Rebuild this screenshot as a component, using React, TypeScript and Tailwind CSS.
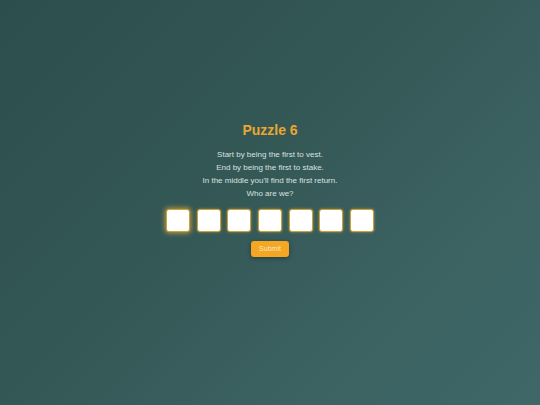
import React from "react";

export default function App() {
  const boxes = [0, 1, 2, 3, 4, 5, 6];
  return (
    <div
      className="w-[540px] h-[405px] overflow-hidden bg-[linear-gradient(135deg,#2c4f4d_0%,#345856_45%,#3c6262_75%,#3f6767_100%)] flex flex-col items-center pt-[122px]"
      style={{ fontFamily: '"Liberation Sans", Arial, sans-serif' }}
    >
      <h1 className="text-[14px] leading-[16px] font-bold text-[#eba62f]">Puzzle 6</h1>
      <div className="mt-[9.5px] text-[8px] leading-[13px] text-[#d9e1e0] text-center">
        <p>Start by being the first to vest.</p>
        <p>End by being the first to stake.</p>
        <p>In the middle you'll find the first return.</p>
        <p>Who are we?</p>
      </div>
      <div className="mt-[9.5px] flex gap-[6.7px]">
        {boxes.map((i) => (
          <div
            key={i}
            className={
              i === 0
                ? "w-[24px] h-[23px] bg-white rounded-[3px] border border-[#c9a03c] shadow-[0_0_5px_1px_rgba(240,180,50,0.75)]"
                : "w-[24px] h-[23px] bg-white rounded-[3px] border border-[#c9a03c] shadow-[0_0_3px_0px_rgba(240,180,50,0.6)]"
            }
          />
        ))}
      </div>
      <button className="mt-[9px] w-[38px] h-[16px] rounded-[3px] bg-[#f5a623] text-[#fbe9c8] text-[7px] leading-[16px] shadow-[0_1px_4px_rgba(0,0,0,0.35)]">
        Submit
      </button>
    </div>
  );
}
